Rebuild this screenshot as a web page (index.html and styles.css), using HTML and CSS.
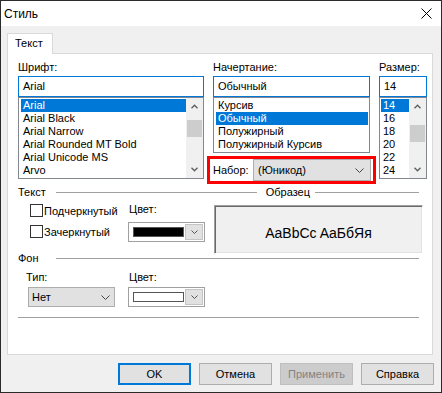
FILE: index.html
```html
<!DOCTYPE html>
<html lang="ru">
<head>
    <meta charset="UTF-8">
    <title>Стиль</title>
    <link rel="stylesheet" href="styles.css">
</head>
<body>

<div class="window">
    <div class="titlebar">
        <span>Стиль</span>
        <svg class="close" width="11" height="11" viewBox="0 0 11 11">
            <path d="M0.5 0.5 L10.5 10.5 M10.5 0.5 L0.5 10.5" stroke="#000" stroke-width="1" fill="none"/>
        </svg>
    </div>

    <div class="client">
        <div class="tabs">
            <div class="tab">Текст</div>
        </div>

        <div class="panel">
            <div class="top-row">
                <!-- font family -->
                <div class="col col-font">
                    <div class="lbl">Шрифт:</div>
                    <div class="input">Arial</div>
                    <div class="listbox list-font">
                        <ul class="items">
                            <li class="sel">Arial</li>
                            <li>Arial Black</li>
                            <li>Arial Narrow</li>
                            <li>Arial Rounded MT Bold</li>
                            <li>Arial Unicode MS</li>
                            <li>Arvo</li>
                        </ul>
                        <div class="scrollbar">
                            <div class="sb-btn"><svg width="7" height="5" viewBox="0 0 7 5"><polyline points="0.5,4.2 3.5,1.2 6.5,4.2" stroke="#606060" stroke-width="1.4" fill="none"/></svg></div>
                            <div class="sb-thumb"></div>
                            <div class="sb-space"></div>
                            <div class="sb-btn"><svg width="7" height="5" viewBox="0 0 7 5"><polyline points="0.5,0.8 3.5,3.8 6.5,0.8" stroke="#606060" stroke-width="1.4" fill="none"/></svg></div>
                        </div>
                    </div>
                </div>

                <!-- font style -->
                <div class="col col-style">
                    <div class="lbl">Начертание:</div>
                    <div class="input">Обычный</div>
                    <div class="listbox list-style">
                        <ul class="items">
                            <li>Курсив</li>
                            <li class="sel">Обычный</li>
                            <li>Полужирный</li>
                            <li>Полужирный Курсив</li>
                        </ul>
                    </div>
                    <div class="charset">
                        <span>Набор:</span>
                        <div class="combo combo-charset">
                            <span>(Юникод)</span>
                            <svg width="9" height="5" viewBox="0 0 9 5"><polyline points="0.5,0.5 4.5,4.5 8.5,0.5" stroke="#444" stroke-width="1" fill="none"/></svg>
                        </div>
                    </div>
                </div>

                <!-- size -->
                <div class="col col-size">
                    <div class="lbl">Размер:</div>
                    <div class="input">14</div>
                    <div class="listbox list-size">
                        <ul class="items">
                            <li class="sel">14</li>
                            <li>16</li>
                            <li>18</li>
                            <li>20</li>
                            <li>22</li>
                            <li>24</li>
                        </ul>
                        <div class="scrollbar">
                            <div class="sb-btn"><svg width="7" height="5" viewBox="0 0 7 5"><polyline points="0.5,4.2 3.5,1.2 6.5,4.2" stroke="#606060" stroke-width="1.4" fill="none"/></svg></div>
                            <div class="sb-thumb thumb-size"></div>
                            <div class="sb-space"></div>
                            <div class="sb-btn"><svg width="7" height="5" viewBox="0 0 7 5"><polyline points="0.5,0.8 3.5,3.8 6.5,0.8" stroke="#606060" stroke-width="1.4" fill="none"/></svg></div>
                        </div>
                    </div>
                </div>
            </div>

            <!-- text group -->
            <div class="group-head head-text">
                <span>Текст</span>
                <span class="rule rule-text"></span>
                <span class="sample-title">Образец</span>
                <span class="rule rule-sample"></span>
            </div>
            <div class="text-body">
                <div class="text-left">
                    <div class="checks">
                        <div class="cb"><span class="box"></span><span class="cb-label">Подчеркнутый</span></div>
                        <div class="cb"><span class="box"></span><span class="cb-label">Зачеркнутый</span></div>
                    </div>
                    <div class="color-col">
                        <div class="lbl">Цвет:</div>
                        <div class="color-combo">
                            <span class="swatch swatch-black"></span>
                            <span class="drop-btn"><svg width="7" height="4" viewBox="0 0 7 4"><polyline points="0.5,0.5 3.5,3.5 6.5,0.5" stroke="#555" stroke-width="1" fill="none"/></svg></span>
                        </div>
                    </div>
                </div>
                <div class="sample">AaBbCc AaБбЯя</div>
            </div>

            <!-- background group -->
            <div class="group-head head-bg">
                <span>Фон</span>
                <span class="rule"></span>
            </div>
            <div class="bg-body">
                <div class="type-col">
                    <div class="lbl">Тип:</div>
                    <div class="combo combo-type">
                        <span>Нет</span>
                        <svg width="9" height="5" viewBox="0 0 9 5"><polyline points="0.5,0.5 4.5,4.5 8.5,0.5" stroke="#444" stroke-width="1" fill="none"/></svg>
                    </div>
                </div>
                <div class="color-col">
                    <div class="lbl">Цвет:</div>
                    <div class="color-combo">
                        <span class="swatch swatch-white"></span>
                        <span class="drop-btn"><svg width="7" height="4" viewBox="0 0 7 4"><polyline points="0.5,0.5 3.5,3.5 6.5,0.5" stroke="#555" stroke-width="1" fill="none"/></svg></span>
                    </div>
                </div>
            </div>
            <div class="rule rule-bottom"></div>
        </div>

        <div class="buttons">
            <button class="btn btn-default">OK</button>
            <button class="btn">Отмена</button>
            <button class="btn" disabled>Применить</button>
            <button class="btn">Справка</button>
        </div>
    </div>
</div>

</body>
</html>
```

FILE: styles.css
```css
* {
    box-sizing: border-box;
}
body {
    margin: 0;
    font-family: 'Liberation Sans', Arial, sans-serif;
    font-size: 11px;
    color: #000;
    background: #fff;
}
.window {
    width: 442px;
    height: 393px;
    border: 1px solid #2b2b2b;
    background: #f0f0f0;
    display: flex;
    flex-direction: column;
}
.titlebar {
    height: 25px;
    background: #fff;
    display: flex;
    align-items: center;
    justify-content: space-between;
    padding: 0 9px 0 3px;
    font-size: 12px;
}
.client {
    flex: 1;
    padding: 7px 7px 0 6px;
    display: flex;
    flex-direction: column;
}
.tabs {
    height: 20px;
    display: flex;
}
.tab {
    position: relative;
    z-index: 1;
    width: 46px;
    height: 21px;
    border: 1px solid #d9d9d9;
    border-bottom: none;
    background: #fff;
    padding-left: 7px;
    line-height: 19px;
}
.panel {
    width: 426px;
    height: 302px;
    background: #fff;
    border: 1px solid #d9d9d9;
    padding: 6px 5px 0 10px;
}
.lbl {
    line-height: 14px;
    height: 14px;
}

/* top row: font / style / size */
.top-row {
    display: flex;
    gap: 9px;
    height: 124px;
}
.col-font {
    width: 186px;
}
.col-style {
    width: 157px;
}
.col-size {
    width: 48px;
}
.input {
    margin-top: 2px;
    height: 21px;
    border: 1px solid #0078d7;
    padding-left: 4px;
    line-height: 19px;
    background: #fff;
}
.listbox {
    display: flex;
    border: 1px solid #828790;
    background: #fff;
}
.list-font, .list-size {
    height: 82px;
}
.list-style {
    height: 56px;
}
.items {
    flex: 1;
    list-style: none;
    margin: 0;
    padding: 1px 0 0 2px;
    overflow: hidden;
}
.list-style .items {
    padding-right: 1px;
}
.list-size .items {
    padding-left: 1px;
}
.items li {
    height: 13px;
    line-height: 13px;
    padding-left: 2px;
    white-space: nowrap;
}
.items li.sel {
    background: #0078d7;
    color: #fff;
}
.scrollbar {
    width: 17px;
    background: #f0f0f0;
    display: flex;
    flex-direction: column;
}
.sb-btn {
    height: 17px;
    display: flex;
    align-items: center;
    justify-content: center;
}
.sb-thumb {
    margin: 5px 1px 0;
    height: 17px;
    background: #cdcdcd;
}
.thumb-size {
    margin-top: 10px;
}
.sb-space {
    flex: 1;
}

.charset {
    margin: 3px 0 0 -6px;
    width: 169px;
    height: 28px;
    border: 3px solid #ff0000;
    padding: 0 2px 0 3px;
    display: flex;
    align-items: center;
    justify-content: space-between;
}
.combo {
    background: #e1e1e1;
    border: 1px solid #adadad;
    display: flex;
    align-items: center;
    justify-content: space-between;
}
.combo-charset {
    width: 118px;
    height: 22px;
    padding: 0 6px 0 4px;
}

/* group boxes */
.group-head {
    display: flex;
    align-items: center;
    height: 12px;
    line-height: 12px;
}
.head-text {
    margin-top: 2px;
}
.head-bg {
    margin-top: -2px;
}
.rule {
    flex: 1;
    height: 1px;
    background: #a0a0a0;
    margin: 0 8px 0 9px;
}
.head-text .rule-text {
    margin: 0 0 0 10px;
}
.sample-title {
    margin: 0 5px 0 9px;
}
.head-text .rule-sample {
    flex: none;
    width: 104px;
    margin: 0 8px 0 0;
}
.head-bg .rule {
    margin-left: 17px;
}
.rule-bottom {
    flex: none;
    margin: 10px 8px 0 0;
}

.text-body {
    display: flex;
    gap: 9px;
}
.text-left {
    width: 187px;
    display: flex;
    padding: 5px 0 0 12px;
}
.checks {
    width: 98px;
    display: flex;
    flex-direction: column;
    gap: 6px;
}
.cb {
    display: flex;
    align-items: center;
    height: 15px;
}
.box {
    width: 13px;
    height: 13px;
    border: 1px solid #333;
    background: #fff;
}
.cb-label {
    margin-left: 1px;
}
.color-col {
    width: 77px;
}
.color-col .lbl {
    padding-left: 1px;
}
.text-left .color-col .lbl {
    margin-top: -1px;
}
.color-combo {
    margin-top: 6px;
    height: 20px;
    border: 1px solid #a0a0a0;
    background: #fff;
    display: flex;
    align-items: center;
    padding: 0 1px 0 4px;
}
.swatch {
    width: 51px;
    height: 10px;
    border: 1px solid #555;
}
.swatch-black {
    background: #000;
}
.swatch-white {
    background: #fff;
}
.drop-btn {
    margin-left: auto;
    width: 18px;
    height: 16px;
    background: #e1e1e1;
    border: 1px solid #c4c4c4;
    display: flex;
    align-items: center;
    justify-content: center;
}
.sample {
    margin-top: 7px;
    width: 209px;
    height: 49px;
    padding-top: 6px;
    background: #f0f0f0;
    border-style: solid;
    border-width: 1px;
    border-color: #a0a0a0 #fff #fff #a0a0a0;
    box-shadow: inset 1px 1px 0 #696969, inset -1px -1px 0 #e3e3e3;
    display: flex;
    align-items: center;
    justify-content: center;
    font-family: 'Liberation Sans', Arial, sans-serif;
    font-size: 14px;
}

.bg-body {
    display: flex;
    padding: 6px 0 0 8px;
}
.type-col {
    width: 102px;
}
.bg-body .color-combo,
.combo-type {
    margin-top: 3px;
}
.combo-type {
    margin-left: 2px;
    width: 87px;
    height: 20px;
    padding: 0 4px 0 3px;
}

/* dialog buttons */
.buttons {
    margin-top: 8px;
    display: flex;
    justify-content: flex-end;
    gap: 8px;
}
.btn {
    width: 73px;
    height: 22px;
    background: #e1e1e1;
    border: 1px solid #adadad;
    font-family: 'Liberation Sans', Arial, sans-serif;
    font-size: 11px;
    color: #000;
    padding: 0;
}
.btn-default {
    border: 2px solid #0078d7;
}
.btn:disabled {
    background: #cccccc;
    border-color: #bfbfbf;
    color: #838383;
}
```
